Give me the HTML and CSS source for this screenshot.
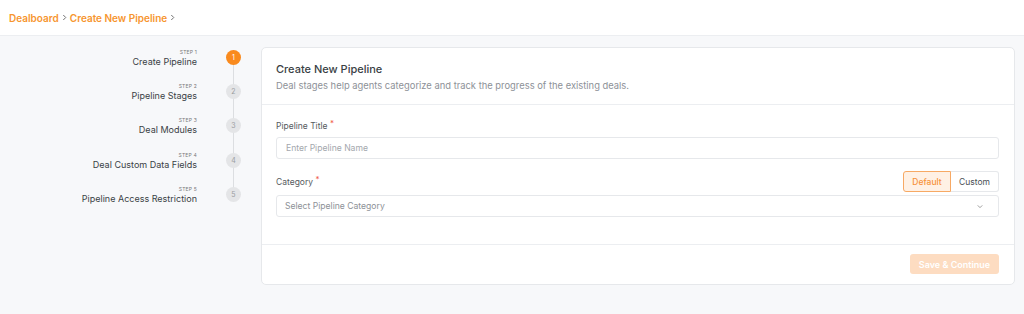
FILE: index.html
```html
<!DOCTYPE html>
<html lang="en">
<head>
    <meta charset="UTF-8">
    <meta name="viewport" content="width=device-width, initial-scale=1.0">
    <title>Create New Pipeline</title>
    <link rel="stylesheet" href="styles.css">
</head>
<body>
    <header class="topbar">
        <nav class="crumbs">
            <a href="#">Dealboard</a>
            <svg class="chev" viewBox="0 0 6 8" width="5" height="7"><path d="M1.5 1l3 3-3 3" fill="none" stroke="#666" stroke-width="1.1"/></svg>
            <a href="#">Create New Pipeline</a>
            <svg class="chev" viewBox="0 0 6 8" width="5" height="7"><path d="M1.5 1l3 3-3 3" fill="none" stroke="#666" stroke-width="1.1"/></svg>
        </nav>
    </header>

    <main class="page">
        <ol class="steps">
            <li class="step active">
                <div class="step-text"><span class="step-no">Step 1</span><span class="step-name">Create Pipeline</span></div>
                <span class="dot">1</span>
            </li>
            <li class="step">
                <div class="step-text"><span class="step-no">Step 2</span><span class="step-name">Pipeline Stages</span></div>
                <span class="dot">2</span>
            </li>
            <li class="step">
                <div class="step-text"><span class="step-no">Step 3</span><span class="step-name">Deal Modules</span></div>
                <span class="dot">3</span>
            </li>
            <li class="step">
                <div class="step-text"><span class="step-no">Step 4</span><span class="step-name">Deal Custom Data Fields</span></div>
                <span class="dot">4</span>
            </li>
            <li class="step">
                <div class="step-text"><span class="step-no">Step 5</span><span class="step-name">Pipeline Access Restriction</span></div>
                <span class="dot">5</span>
            </li>
        </ol>

        <section class="card">
            <div class="card-head">
                <h1>Create New Pipeline</h1>
                <p>Deal stages help agents categorize and track the progress of the existing deals.</p>
            </div>
            <div class="card-body">
                <label class="field-label">Pipeline Title <span class="req">*</span></label>
                <input class="input" type="text" placeholder="Enter Pipeline Name">

                <div class="cat-row">
                    <label class="field-label">Category <span class="req">*</span></label>
                    <div class="toggle">
                        <button class="tg on">Default</button>
                        <button class="tg">Custom</button>
                    </div>
                </div>
                <div class="select">
                    <span>Select Pipeline Category</span>
                    <svg viewBox="0 0 8 6" width="6" height="5"><path d="M1 1.5l3 3 3-3" fill="none" stroke="#888" stroke-width="1.1"/></svg>
                </div>
            </div>
            <div class="card-foot">
                <button class="save" disabled>Save &amp; Continue</button>
            </div>
        </section>
    </main>
</body>
</html>
```

FILE: styles.css
```css
body {
    margin: 0;
    background-color: #f7f8fa;
    font-family: Inter, "Noto Sans", sans-serif;
    color: #343a40;
}
.topbar {
    height: 35px;
    background-color: #fff;
    border-bottom: 1px solid #eceef1;
    display: flex;
    align-items: center;
    padding-left: 9px;
}
.crumbs {
    display: flex;
    align-items: center;
    gap: 2px;
    font-size: 10px;
    font-weight: 600;
}
.crumbs a {
    color: #f7962f;
    text-decoration: none;
}
.chev {
    margin: 0 1px;
}
.page {
    display: flex;
    align-items: flex-start;
    padding: 4px 9px 0 0;
}
.steps {
    list-style: none;
    margin: 0;
    padding: 0;
    width: 241px;
    flex-shrink: 0;
    margin-right: 20px;
}
.step {
    display: flex;
    justify-content: flex-end;
    align-items: center;
    height: 34.3px;
    position: relative;
}
.step:not(:last-child)::after {
    content: "";
    position: absolute;
    right: 7px;
    top: 50%;
    width: 1.5px;
    height: 34.3px;
    background-color: #dcdee1;
}
.step-text {
    display: flex;
    flex-direction: column;
    align-items: flex-end;
    margin-right: 29px;
    margin-top: 2px;
}
.step-no {
    font-size: 5px;
    text-transform: uppercase;
    letter-spacing: 0.2px;
    color: #777;
    line-height: 7px;
}
.step-name {
    font-size: 9px;
    font-weight: 400;
    color: #3a3f45;
    line-height: 12px;
}
.dot {
    width: 15px;
    height: 15px;
    border-radius: 50%;
    background-color: #e4e5e7;
    color: #9a9da1;
    font-size: 7px;
    display: flex;
    align-items: center;
    justify-content: center;
    position: relative;
    z-index: 1;
}
.active .dot {
    background-color: #f98a1e;
    color: #fff;
}
.card {
    flex: 1;
    margin-top: 7px;
    background-color: #fff;
    border: 1px solid #e6e8eb;
    border-radius: 5px;
}
.card-head {
    padding: 14px 14px 12px;
    border-bottom: 1px solid #eceef1;
}
.card-head h1 {
    margin: 0;
    font-size: 11px;
    font-weight: 500;
    line-height: 14px;
    color: #3a3f45;
}
.card-head p {
    margin: 4px 0 0;
    font-size: 9.4px;
    line-height: 12px;
    color: #8d9197;
}
.card-body {
    padding: 15px 15px 27px 14px;
}
.field-label {
    display: block;
    font-size: 8.5px;
    line-height: 12px;
    color: #555a60;
    margin-bottom: 5px;
}
.req {
    color: #f05a4a;
    font-size: 8px;
    vertical-align: top;
    position: relative;
    top: -3px;
}
.input,
.select {
    box-sizing: border-box;
    width: 100%;
    height: 22px;
    border: 1px solid #e6e8eb;
    border-radius: 3px;
    padding: 0 9px;
    font-family: inherit;
    font-size: 8.6px;
    color: #333;
    display: block;
}
.input::placeholder {
    color: #a3a7ad;
}
.cat-row {
    display: flex;
    justify-content: space-between;
    align-items: center;
    margin-top: 12px;
    margin-bottom: 3px;
}
.cat-row .field-label {
    margin-bottom: 0;
}
.toggle {
    display: flex;
}
.tg {
    height: 21px;
    width: 48px;
    font-family: inherit;
    font-size: 8.5px;
    border: 1px solid #e6e8eb;
    background-color: #fff;
    color: #4a4f55;
    padding: 0;
    cursor: pointer;
}
.tg:first-child {
    border-radius: 3px 0 0 3px;
}
.tg:last-child {
    border-radius: 0 3px 3px 0;
    border-left: none;
}
.tg.on {
    background-color: #fff1e5;
    border-color: #f7a964;
    color: #f7923a;
    font-weight: 500;
}
.select {
    display: flex;
    align-items: center;
    justify-content: space-between;
    padding: 0 15px 0 8px;
    color: #8d9197;
}
.card-foot {
    border-top: 1px solid #eceef1;
    padding: 9px 15px 10px;
    display: flex;
    justify-content: flex-end;
}
.save {
    height: 20px;
    width: 89px;
    border: none;
    border-radius: 3px;
    background-color: #fddcc1;
    color: #fff;
    font-family: inherit;
    font-size: 9px;
    font-weight: 600;
    padding: 0;
}
```
